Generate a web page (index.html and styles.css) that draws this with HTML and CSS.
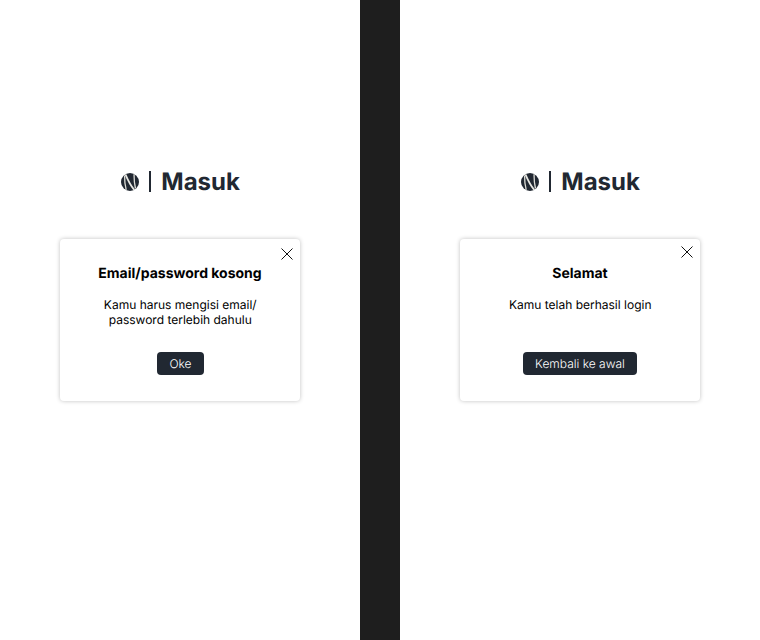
FILE: index.html
```html
<!DOCTYPE html>
<html lang="id">
<head>
<meta charset="utf-8">
<title>Masuk</title>
<link rel="stylesheet" href="styles.css">
</head>
<body>
<svg class="defs" width="0" height="0">
  <symbol id="logo" viewBox="0 0 18 18">
    <circle cx="9" cy="9" r="9" fill="#212832"/>
    <path d="M3.600 2.500C3.500 7 4 12 5.200 16.800M13 1.200C13 6 13.500 11 14.500 15.500" fill="none" stroke="#deded8" stroke-width="1.300"/>
    <path d="M4.500 1.500C7 7.500 10 13 13.300 17" fill="none" stroke="#e8e8e3" stroke-width="1.900"/>
  </symbol>
  <symbol id="close" viewBox="0 0 12 12">
    <path d="M.5.5l11 11M11.5.5l-11 11" fill="none" stroke="#111"/>
  </symbol>
</svg>
<main class="board">
  <section class="screen">
    <header class="brand">
      <svg class="logo"><use href="#logo"/></svg>
      <span class="rule"></span>
      <h1>Masuk</h1>
    </header>
    <div class="dialog">
      <svg class="close"><use href="#close"/></svg>
      <h2>Email/password kosong</h2>
      <p>Kamu harus mengisi email/<br>password terlebih dahulu</p>
      <button class="btn btn-short">Oke</button>
    </div>
  </section>
  <section class="screen">
    <header class="brand">
      <svg class="logo"><use href="#logo"/></svg>
      <span class="rule"></span>
      <h1>Masuk</h1>
    </header>
    <div class="dialog">
      <svg class="close close-high"><use href="#close"/></svg>
      <h2>Selamat</h2>
      <p>Kamu telah berhasil login</p>
      <button class="btn">Kembali ke awal</button>
    </div>
  </section>
</main>
</body>
</html>
```
FILE: styles.css
```css
* { box-sizing: border-box; margin: 0; }
body { background: #1e1e1e; font-family: Inter, sans-serif; color: #000; text-rendering: geometricPrecision; }
.defs { display: none; }
.board { display: flex; gap: 40px; height: 640px; }
.screen { width: 360px; height: 640px; background: #fff; display: flex; flex-direction: column; align-items: center; padding-top: 167px; }
.brand { display: flex; align-items: center; height: 29px; padding-left: 1px; }
.logo { width: 18px; height: 18px; }
.rule { width: 2px; height: 21px; margin: 0 11px 0 10px; background: #212832; }
h1 { font-size: 24px; line-height: 29px; font-weight: 700; color: #212832; }
.brand h1 { margin-left: -.8px; }
.dialog { position: relative; width: 240px; height: 162px; margin-top: 43px; border-radius: 4px; background: #fff; box-shadow: 0 0 4px rgba(0,0,0,.25); display: flex; flex-direction: column; align-items: center; padding-top: 26px; text-align: center; }
.close { position: absolute; top: 9px; right: 7px; width: 12px; height: 12px; }
.close-high { top: 7px; }
h2 { font-size: 14px; line-height: 17px; font-weight: 700; }
p { font-size: 12px; line-height: 15px; height: 30px; margin-top: 15px; padding-left: .5px; }
.btn { height: 23px; margin-top: 25px; padding: 0 12px; border: 0; border-radius: 4px; background: #212832; color: #fff; font: 300 12px/23px Inter, sans-serif; text-rendering: geometricPrecision; }
.btn-short { width: 47px; margin-left: 1px; }
```
